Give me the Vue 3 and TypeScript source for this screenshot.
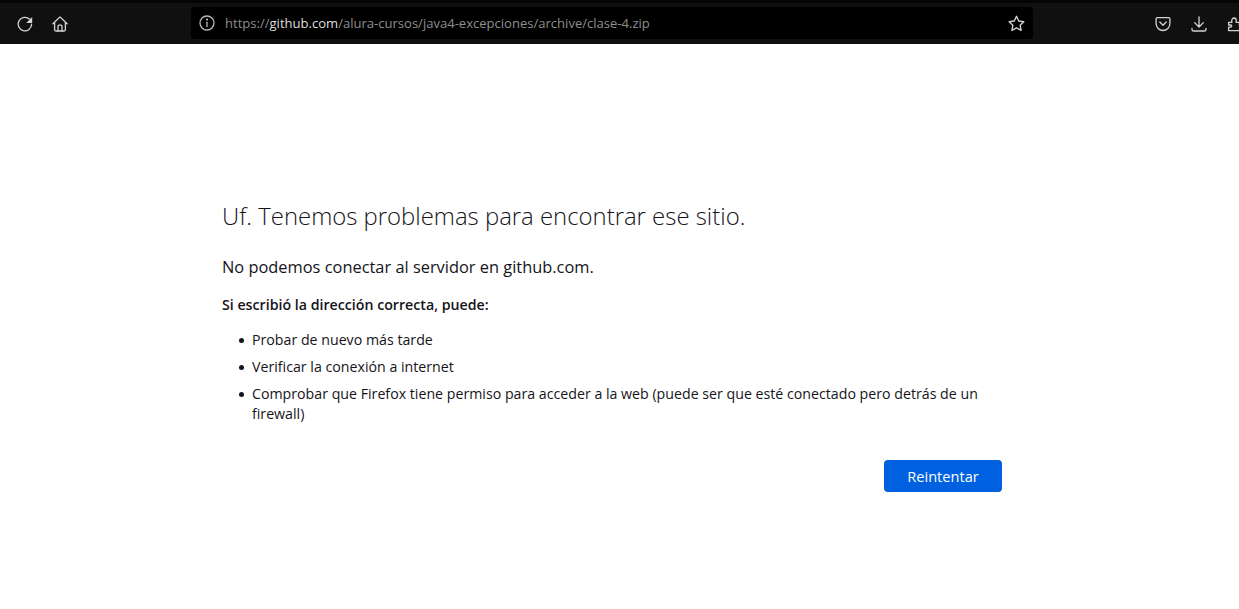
<script setup lang="ts">
const tips = [
  "Probar de nuevo más tarde",
  "Verificar la conexión a internet",
  "Comprobar que Firefox tiene permiso para acceder a la web (puede ser que esté conectado pero detrás de un firewall)",
];
</script>

<template>
  <div class="browser">
    <header class="toolbar">
      <div class="nav-btns">
        <svg class="icon" viewBox="0 0 16 16">
          <path d="M14.6 8.2a6.7 6.7 0 1 1-2.2-5.1" />
          <path class="solid" d="M15.2.9v6h-6z" />
        </svg>
        <svg class="icon" viewBox="0 0 16 16">
          <path d="M.9 7.8 8 .9l7.1 6.9M2.6 6.6v6.8a1.6 1.6 0 0 0 1.6 1.6h7.6a1.6 1.6 0 0 0 1.6-1.6V6.6" />
          <path d="M6 15V10.2a1 1 0 0 1 1-1h2a1 1 0 0 1 1 1V15" />
        </svg>
      </div>
      <div class="urlbar">
        <svg class="icon info" viewBox="0 0 16 16">
          <circle cx="8" cy="8" r="7" />
          <path d="M8 7.2v4.4" />
          <circle class="solid" cx="8" cy="4.6" r="1" />
        </svg>
        <span class="url">https://<b>github.com</b>/alura-cursos/java4-excepciones/archive/clase-4.zip</span>
        <svg class="icon star" viewBox="0 0 16 16">
          <path d="M8 1.2l2.1 4.4 4.8.7-3.5 3.3.9 4.9L8 12.2l-4.3 2.3.9-4.9L1.1 6.3l4.8-.7z" />
        </svg>
      </div>
      <div class="tools">
        <svg class="icon" viewBox="0 0 16 16">
          <path d="M2.4 1.6h11.2a1.3 1.3 0 0 1 1.3 1.3v4.7a6.9 6.9 0 0 1-13.8 0V2.9a1.3 1.3 0 0 1 1.3-1.3z" />
          <path d="M4.8 6 8 9.2 11.2 6" />
        </svg>
        <svg class="icon" viewBox="0 0 16 16">
          <path d="M8 .8v10M3.6 6.6 8 11l4.4-4.4M1 12.4v1a1.6 1.6 0 0 0 1.6 1.6h10.8a1.6 1.6 0 0 0 1.6-1.6v-1" />
        </svg>
        <svg class="icon" viewBox="0 0 16 16">
          <path d="M1.6 6.4h3.2V4.2a2.2 2.2 0 0 1 4.4 0v2.2h3.2v3h1.2a2 2 0 0 1 0 4h-1.2v1.2H1.6v-3.4h2a1.1 1.1 0 0 0 0-2.2h-2z" />
        </svg>
      </div>
    </header>

    <main class="page">
      <div class="error-box">
        <h1>Uf. Tenemos problemas para encontrar ese sitio.</h1>
        <p class="lead">No podemos conectar al servidor en github.com.</p>
        <p class="hint">Si escribió la dirección correcta, puede:</p>
        <ul>
          <li v-for="tip in tips" :key="tip">{{ tip }}</li>
        </ul>
        <div class="actions">
          <button class="retry">Reintentar</button>
        </div>
      </div>
    </main>
  </div>
</template>

<style>
html,
body {
  margin: 0;
  background: #fff;
  overflow: hidden;
}
</style>

<style scoped>
.browser {
  height: 609px;
  display: flex;
  flex-direction: column;
  font-family: "Open Sans", "Noto Sans", sans-serif;
  background: #fff;
}

.toolbar {
  height: 44px;
  padding: 3px 0 0 17px;
  display: flex;
  align-items: center;
  flex-shrink: 0;
  box-sizing: border-box;
  background: linear-gradient(#050505 3px, #101010 3px);
  overflow: hidden;
}

.nav-btns {
  display: flex;
  gap: 19px;
  width: 174px;
  flex-shrink: 0;
}

.icon {
  width: 16px;
  height: 16px;
  flex-shrink: 0;
  fill: none;
  stroke: #d4d4d4;
  stroke-width: 1.3;
  stroke-linecap: round;
  stroke-linejoin: round;
}

.icon .solid {
  fill: #d4d4d4;
  stroke: none;
}

.urlbar {
  width: 842px;
  height: 32px;
  margin-top: -1px;
  padding: 0 8px;
  display: flex;
  align-items: center;
  flex-shrink: 0;
  box-sizing: border-box;
  background: #000;
  border-radius: 4px;
}

.info {
  stroke: #b8b8b8;
}

.url {
  flex: 1;
  margin-left: 10px;
  font-size: 13.05px;
  color: #8e8e8e;
  white-space: nowrap;
}

.url b {
  font-weight: 400;
  color: #dedede;
}

.star {
  width: 17px;
  height: 17px;
}

.tools {
  display: flex;
  gap: 20px;
  margin-left: 122px;
  flex-shrink: 0;
}

.page {
  flex: 1;
  padding: 155px 0 0 222px;
}

.error-box {
  width: 780px;
  color: #15141a;
}

h1 {
  margin: 0;
  font-size: 23.9px;
  font-weight: 300;
  line-height: 34px;
}

.lead {
  margin: 23px 0 0;
  font-size: 16.4px;
  line-height: 22px;
}

.hint {
  margin: 17px 0 0;
  font-size: 14.2px;
  font-weight: 600;
  line-height: 20px;
}

ul {
  margin: 15px 0 0;
  padding: 0 0 0 30px;
  font-size: 14.2px;
  line-height: 20px;
  list-style: none;
}

li {
  position: relative;
}

li::before {
  content: "";
  position: absolute;
  left: -13px;
  top: 8px;
  width: 5px;
  height: 5px;
  border-radius: 50%;
  background: #15141a;
}

li + li {
  margin-top: 7px;
}

.actions {
  display: flex;
  justify-content: flex-end;
  margin-top: 36px;
}

.retry {
  width: 118px;
  height: 32px;
  border: 0;
  border-radius: 4px;
  background: #0061e0;
  color: #fff;
  font-family: inherit;
  font-size: 14.6px;
  font-weight: 500;
}
</style>
